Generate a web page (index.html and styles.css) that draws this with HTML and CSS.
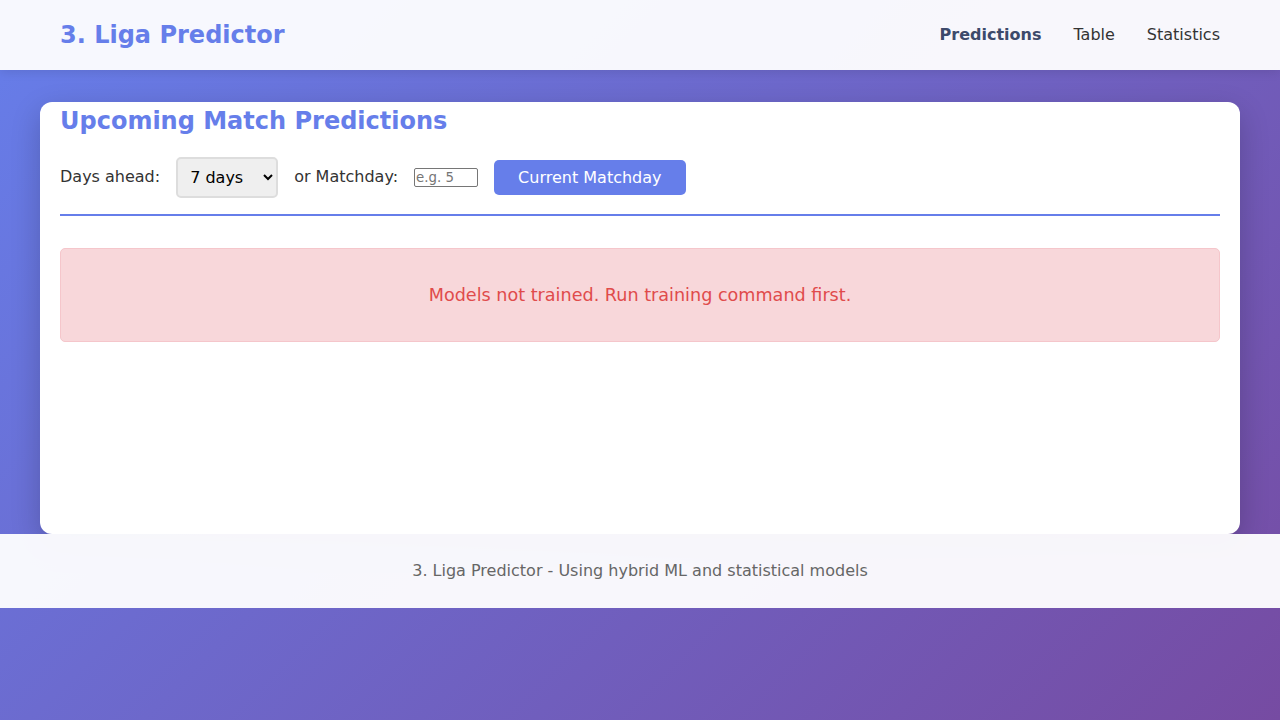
FILE: index.html
```html
<!DOCTYPE html>
<html lang="en">
<head>
<meta charset="utf-8">
<title>3. Liga Predictor</title>
<link rel="stylesheet" href="styles.css">
</head>
<body>
<header class="site-header">
  <div class="header-inner">
    <div class="logo">3. Liga Predictor</div>
    <nav class="nav">
      <a class="nav-link active" href="#">Predictions</a>
      <a class="nav-link" href="#">Table</a>
      <a class="nav-link" href="#">Statistics</a>
    </nav>
  </div>
</header>
<main class="main">
  <section class="card">
    <h2 class="card-title">Upcoming Match Predictions</h2>
    <div class="controls">
      <label class="control-label" for="days">Days ahead:</label>
      <select id="days" class="select">
        <option>7 days</option>
      </select>
      <label class="control-label" for="md">or Matchday:</label>
      <input id="md" class="md-input" type="number" placeholder="e.g. 5">
      <button class="btn" type="button">Current Matchday</button>
    </div>
    <div class="error">Models not trained. Run training command first.</div>
  </section>
</main>
<footer class="site-footer">3. Liga Predictor - Using hybrid ML and statistical models</footer>
</body>
</html>
```
FILE: styles.css
```css
* { box-sizing: border-box; }
html { min-height: 100%; }
body {
  margin: 0;
  min-height: 100vh;
  font-family: "DejaVu Sans", sans-serif;
  font-size: 16px;
  line-height: 1.6;
  color: #333;
  background: linear-gradient(135deg, #667eea 0%, #764ba2 100%);
}
.site-header {
  background: rgba(255, 255, 255, 0.95);
  box-shadow: 0 2px 10px rgba(0, 0, 0, 0.1);
  padding: 16px 0;
}
.header-inner {
  max-width: 1200px;
  margin: 0 auto;
  padding: 0 20px;
  display: flex;
  justify-content: space-between;
  align-items: center;
}
.logo {
  font-size: 24px;
  font-weight: bold;
  color: #667eea;
}
.nav { display: flex; gap: 32px; }
.nav-link { color: #333; text-decoration: none; }
.nav-link.active { font-weight: bold; color: #3d4a6b; }
.main {
  max-width: 1200px;
  margin: 32px auto 0;
}
.card {
  background: #fff;
  border-radius: 12px;
  box-shadow: 0 10px 30px rgba(0, 0, 0, 0.2);
  padding: 0 20px 20px;
  min-height: 432px;
}
.card-title {
  margin: 0 0 16px;
  font-size: 24px;
  color: #667eea;
}
.controls {
  display: flex;
  align-items: center;
  gap: 16px;
  padding-bottom: 16px;
  border-bottom: 2px solid #667eea;
}
.select {
  font-family: "DejaVu Sans", sans-serif;
  font-size: 16px;
  padding: 8px 6px 8px 8px;
  border: 2px solid #ddd;
  border-radius: 5px;
  background-color: #efefef;
  color: #000;
  width: 102px;
}
.md-input {
  width: 64px;
  height: 19px;
  padding: 0 1px;
  font-family: "DejaVu Sans", sans-serif;
  font-size: 13.33px;
  border: 1px solid #767676;
  border-radius: 2px;
}
.btn {
  font-family: "DejaVu Sans", sans-serif;
  font-size: 16px;
  line-height: 19px;
  padding: 8px 24px;
  background: #667eea;
  color: #fff;
  border: none;
  border-radius: 5px;
}
.error {
  margin-top: 32px;
  background: #f8d7da;
  border: 1px solid #f5c6cb;
  border-radius: 5px;
  color: #e04b4b;
  text-align: center;
  padding: 32px;
  font-size: 17.6px;
}
.site-footer {
  background: rgba(255, 255, 255, 0.95);
  text-align: center;
  color: #666;
  padding: 24px 0;
}
```
